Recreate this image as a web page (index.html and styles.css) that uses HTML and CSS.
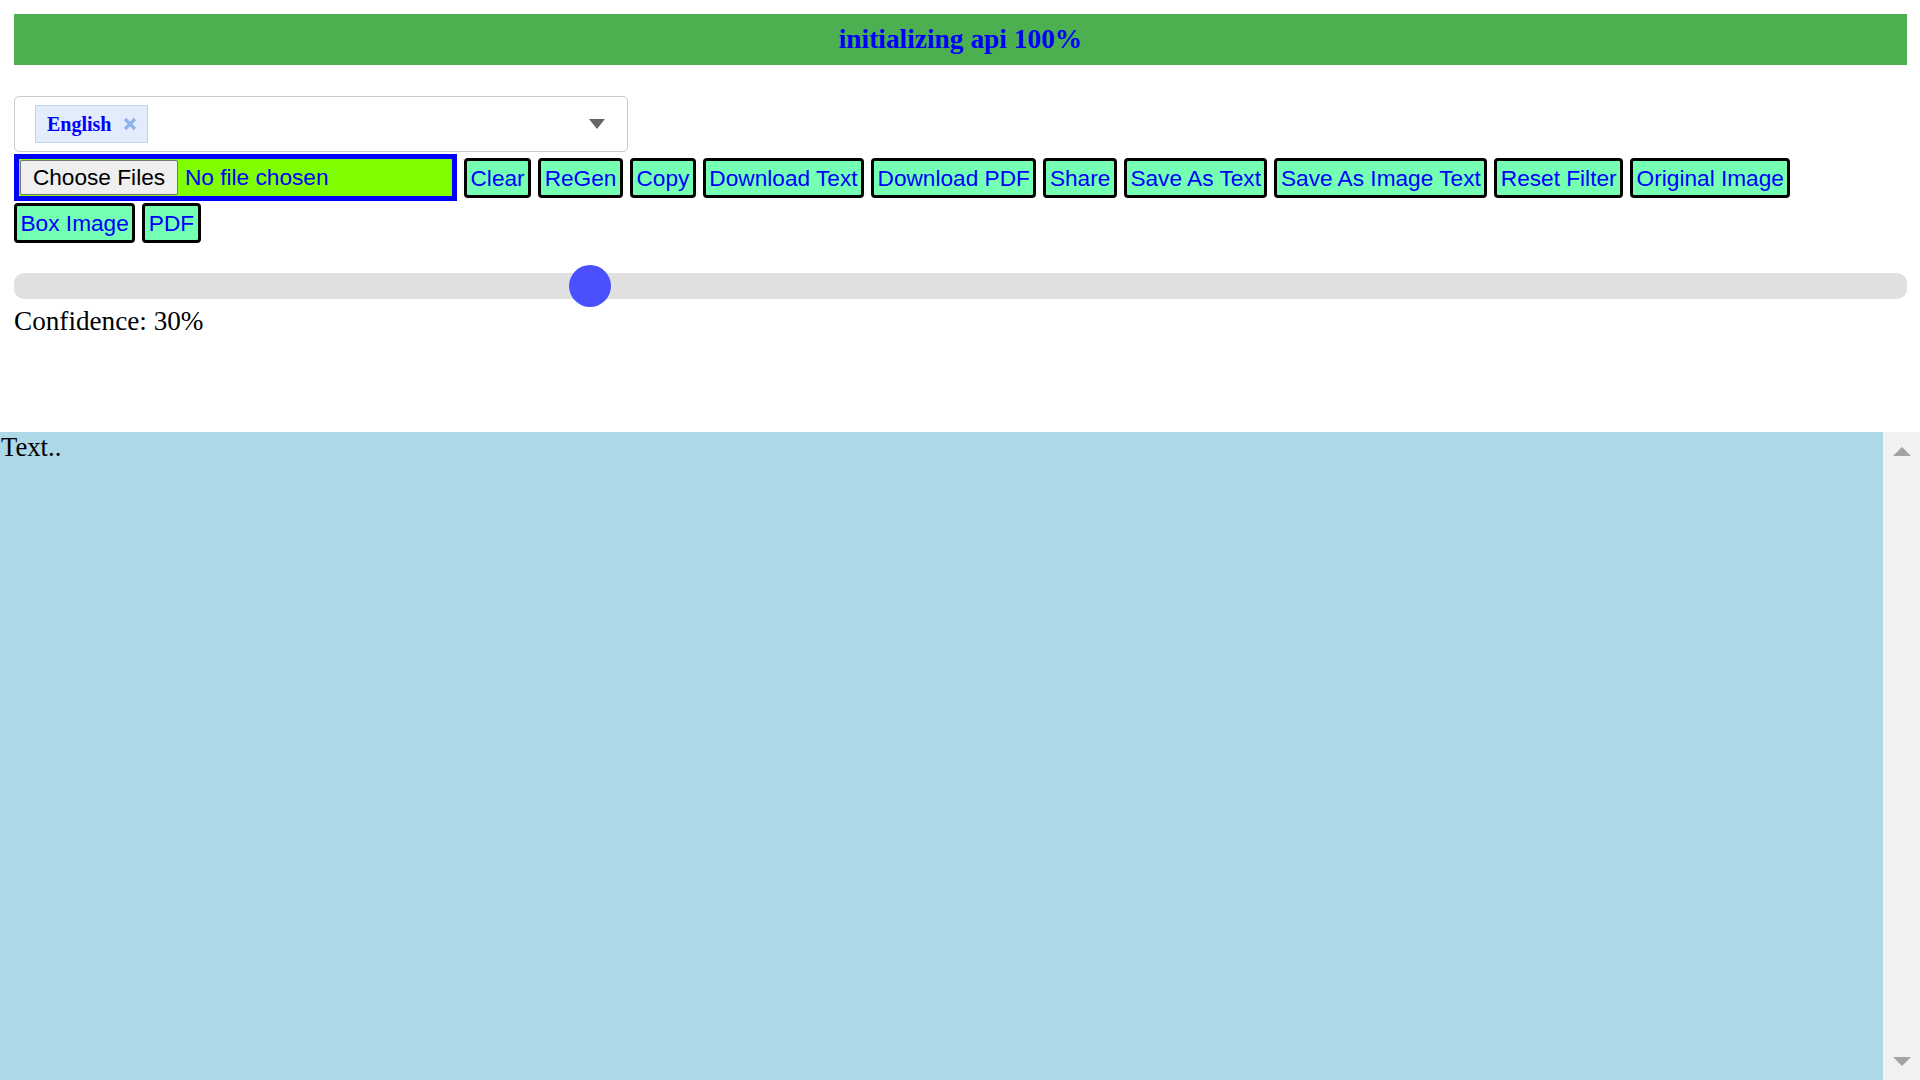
FILE: index.html
```html
<!DOCTYPE html>
<html lang="en">
<head>
<meta charset="utf-8">
<title>OCR</title>
<link rel="stylesheet" href="styles.css">
</head>
<body>
<div class="page">
  <div class="status">initializing api 100%</div>

  <div class="lang-select">
    <span class="chip">English
      <svg class="chip-x" width="14" height="14" viewBox="0 0 14 14" aria-hidden="true">
        <path d="M2 2 L12 12 M12 2 L2 12" stroke="#8db3ea" stroke-width="3.2" stroke-linecap="butt" fill="none"/>
      </svg>
    </span>
    <span class="caret"></span>
  </div>

  <div class="toolbar">
    <label class="file">
      <span class="file-btn">Choose Files</span>
      <span class="file-name">No file chosen</span>
      <input type="file" multiple hidden>
    </label>
    <button class="btn">Clear</button>
    <button class="btn">ReGen</button>
    <button class="btn">Copy</button>
    <button class="btn">Download Text</button>
    <button class="btn">Download PDF</button>
    <button class="btn">Share</button>
    <button class="btn">Save As Text</button>
    <button class="btn">Save As Image Text</button>
    <button class="btn">Reset Filter</button>
    <button class="btn">Original Image</button>
    <button class="btn">Box Image</button>
    <button class="btn">PDF</button>
  </div>

  <input class="range" type="range" min="0" max="100" value="30">
  <div class="confidence">Confidence: 30%</div>
</div>

<div class="output">
  <textarea class="output-text">Text..</textarea>
  <div class="scrollbar">
    <span class="arrow-up"></span>
    <span class="arrow-down"></span>
  </div>
</div>
</body>
</html>
```

FILE: styles.css
```css
html, body {
  margin: 0;
  padding: 0;
  overflow: hidden;
  background: #fff;
}

body {
  font-family: "Liberation Serif", "Times New Roman", serif;
}

.page {
  padding: 14px 13px 0 14px;
}

.status {
  height: 51px;
  background: #4caf50;
  color: #0000ff;
  font-weight: bold;
  font-size: 27.4px;
  display: flex;
  align-items: center;
  justify-content: center;
}

.lang-select {
  margin-top: 31px;
  width: 614px;
  height: 56px;
  box-sizing: border-box;
  border: 1px solid #cccccc;
  border-radius: 5px;
  display: flex;
  align-items: center;
  justify-content: space-between;
  padding: 0 22px 0 20px;
}

.chip {
  height: 38px;
  box-sizing: border-box;
  display: flex;
  align-items: center;
  gap: 12px;
  padding: 0 10px 0 11px;
  background: #e2ecfb;
  border: 1px solid #b9d4f6;
  color: #0000ff;
  font-weight: bold;
  font-size: 20px;
}

.chip-x {
  display: block;
}

.caret {
  width: 0;
  height: 0;
  border-left: 8px solid transparent;
  border-right: 8px solid transparent;
  border-top: 10px solid #666666;
}

.toolbar {
  margin-top: 2px;
  display: flex;
  flex-wrap: wrap;
  align-items: center;
  column-gap: 7px;
  row-gap: 2px;
}

.file {
  width: 443px;
  height: 47px;
  box-sizing: border-box;
  border: 5px solid #0000ff;
  background: #7fff00;
  display: flex;
  align-items: center;
  font-family: "Liberation Sans", Arial, sans-serif;
  font-size: 22.67px;
}

.file-btn {
  margin-left: 1px;
  width: 158px;
  height: 35px;
  box-sizing: border-box;
  border: 1px solid #767676;
  border-radius: 2px;
  background: #efefef;
  color: #000;
  display: flex;
  align-items: center;
  justify-content: center;
}

.file-name {
  margin-left: 7px;
  color: #0000ff;
}

.btn {
  margin: 0;
  height: 40px;
  box-sizing: border-box;
  padding: 4px 3.5px;
  border: 3px solid #000;
  border-radius: 4px;
  background: #74ffb2;
  color: #0000ff;
  font-family: "Liberation Sans", Arial, sans-serif;
  font-size: 22.67px;
  line-height: 26px;
}

.range {
  -webkit-appearance: none;
  appearance: none;
  display: block;
  margin: 30px 0 0 0;
  width: 100%;
  height: 26px;
  background: #e0e0e0;
  border-radius: 10px;
  outline: none;
}

.range::-webkit-slider-thumb {
  -webkit-appearance: none;
  appearance: none;
  width: 42px;
  height: 42px;
  border-radius: 50%;
  background: #4b50ff;
  border: none;
}

.confidence {
  margin-top: 7px;
  font-size: 27.2px;
  color: #000;
}

.output {
  margin-top: 95px;
  height: 648px;
  display: flex;
}

.output-text {
  flex: 1;
  margin: 0;
  padding: 0 0 0 1px;
  border: none;
  outline: none;
  resize: none;
  background: #add8e6;
  color: #000;
  font-family: "Liberation Serif", "Times New Roman", serif;
  font-size: 26.67px;
}

.scrollbar {
  width: 37px;
  box-sizing: border-box;
  background: #f1f1f1;
  padding: 15px 9px 14px 10px;
  display: flex;
  flex-direction: column;
  justify-content: space-between;
}

.arrow-up {
  width: 0;
  height: 0;
  border-left: 9px solid transparent;
  border-right: 9px solid transparent;
  border-bottom: 9px solid #a3a3a3;
}

.arrow-down {
  width: 0;
  height: 0;
  border-left: 9px solid transparent;
  border-right: 9px solid transparent;
  border-top: 9px solid #a3a3a3;
}
```
